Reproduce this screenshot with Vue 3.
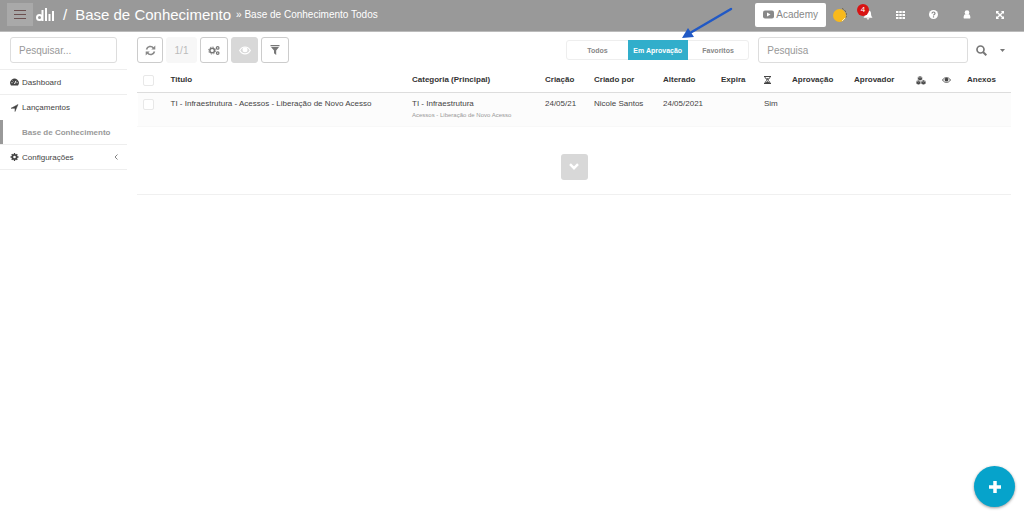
<script setup>
import { ref } from 'vue'

const tabs = ['Todos', 'Em Aprovação', 'Favoritos']
const active = ref('Em Aprovação')
const menuTerm = ref('')
const term = ref('')
const rows = [
  {
    title: 'TI - Infraestrutura - Acessos - Liberação de Novo Acesso',
    category: 'TI - Infraestrutura',
    sub: 'Acessos - Liberação de Novo Acesso',
    created: '24/05/21',
    author: 'Nicole Santos',
    changed: '24/05/2021',
    wait: 'Sim'
  }
]
</script>

<template>
  <div class="app">
    <header class="topbar">
      <button class="burger" aria-label="Menu">
        <svg width="12" height="11" viewBox="0 0 12 11"><path d="M0 1.5h12M0 5.5h12M0 9.5h12" stroke="#6b5050" /></svg>
      </button>
      <svg class="logo" width="19" height="14" viewBox="0 0 19 14" fill="none" stroke="#fff" stroke-width="2">
        <circle cx="3.5" cy="9.5" r="2.5" /><path d="M6.500 2v11M10 0v13M13.500 6v7M17 3v10" />
      </svg>
      <span class="slash">/</span>
      <h1>Base de Conhecimento</h1>
      <span class="crumb">» Base de Conhecimento Todos</span>
      <a class="academy" href="#">
        <svg width="11" height="9" viewBox="0 0 11 9"><rect y="0.5" width="11" height="8" rx="2" fill="#888" /><path d="M4 2.5v4l3.5-2z" fill="#fff" /></svg>
        Academy
      </a>
      <svg class="coin" width="14" height="16" viewBox="0 0 14 16">
        <path d="M9 1.5a7 7 0 0 1 4 9" fill="none" stroke="#705f38" stroke-dasharray="2 1" />
        <circle cx="6.5" cy="8.5" r="6.5" fill="#f8b91c" /><path d="M9 14l3-3" stroke="#fff0bd" />
      </svg>
      <nav class="icons">
        <button aria-label="Notificações">
          <svg width="10" height="10" viewBox="0 0 10 10" fill="#fff"><path d="M5 0.5a3 3 0 0 1 3 3c0 2 .5 3 1.500 4.300H.5C1.500 6.500 2 5.500 2 3.500a3 3 0 0 1 3-3zM3.700 8.300h2.600a1.300 1.300 0 0 1-2.600 0z" /></svg>
          <span class="badge">4</span>
        </button>
        <button aria-label="Aplicativos">
          <svg width="9" height="8" viewBox="0 0 9 8"><path d="M0 1h9M0 4h9M0 7h9" stroke="#fff" stroke-width="2.200" stroke-dasharray="2.500 .75" /></svg>
        </button>
        <button aria-label="Ajuda">
          <svg width="9" height="9" viewBox="0 0 9 9"><circle cx="4.500" cy="4.500" r="4.500" fill="#fff" /><path d="M3 3.500c0-2 3-2 3 0 0 1-1.500 1-1.500 2M4.500 6.300v1.200" fill="none" stroke="#888" stroke-width="1.200" /></svg>
        </button>
        <button aria-label="Usuário">
          <svg width="8" height="9" viewBox="0 0 8 9" fill="#fff"><circle cx="4" cy="2.500" r="2.300" /><path d="M1 8.500C.3 8.500.5 4.500 2.300 4.300h3.400C7.500 4.500 7.700 8.500 7 8.500z" /></svg>
        </button>
        <button aria-label="Tela cheia">
          <svg width="8" height="8" viewBox="0 0 9 9" fill="#fff"><path d="M0 0h3.500L0 3.500zM9 0v3.500L5.500 0zM0 9V5.500L3.500 9zM9 9H5.500L9 5.500z" /><path d="M1 1l7 7M8 1L1 8" stroke="#fff" stroke-width="1.600" /></svg>
        </button>
      </nav>
    </header>

    <div class="body">
      <aside>
        <div class="side-search"><input v-model="menuTerm" class="field" type="text" placeholder="Pesquisar..." aria-label="Pesquisar no menu"></div>
        <nav class="menu">
          <a href="#" class="item">
            <svg width="9" height="8" viewBox="0 0 9 8"><path d="M1 7.500a4.300 4.300 0 1 1 7 0z" fill="#444" /><path d="M4.500 6L6 2.800M1.500 4.700h1M2.700 2.700l.6.6M6.600 4.700h1" stroke="#fff" /></svg>
            Dashboard
          </a>
          <div class="group">
            <a href="#" class="item">
              <svg width="9" height="8" viewBox="0 0 9 8"><path d="M8 .5L5 7.500V4.300H1z" fill="#444" stroke="#444" stroke-width=".5" /></svg>
              Lançamentos
            </a>
            <a href="#" class="item current">Base de Conhecimento</a>
          </div>
          <a href="#" class="item">
            <svg width="9" height="8" viewBox="0 0 8 8"><circle cx="4" cy="4" r="3" fill="#444" /><path d="M4 0v8M0 4h8M1.200 1.200l5.600 5.600M6.800 1.200L1.200 6.800" stroke="#444" stroke-width="1.300" /><circle cx="4" cy="4" r="1.300" fill="#fff" /></svg>
            Configurações
            <svg class="chev" width="4" height="6" viewBox="0 0 4 6"><path d="M3.500.5L1 3l2.500 2.500" fill="none" stroke="#777" stroke-width=".9" /></svg>
          </a>
        </nav>
      </aside>

      <main>
        <div class="toolbar">
          <button class="btn" aria-label="Atualizar">
            <svg width="11" height="11" viewBox="0 0 11 11" fill="none" stroke="#888" stroke-width="1.600"><path d="M1.500 4.500a4 4 0 0 1 7-1.500M9.500 6.500a4 4 0 0 1-7 1.500" /><path d="M10.300 .5v4h-4zM.7 10.500v-4h4z" fill="#888" stroke="none" /></svg>
          </button>
          <button class="btn page" disabled>1/1</button>
          <button class="btn wide" aria-label="Configurar">
            <svg width="12" height="11" viewBox="0 0 13 11" fill="none" stroke="#777"><circle cx="4.500" cy="5.500" r="2.500" stroke-width="1.600" /><circle cx="4.500" cy="5.500" r="3.800" stroke-dasharray="1.500 1.480" /><circle cx="10.500" cy="2.700" r="1.400" stroke-width="1.300" /><circle cx="10.500" cy="8.300" r="1.400" stroke-width="1.300" /></svg>
          </button>
          <button class="btn page grey" disabled aria-label="Visualizar">
            <svg width="12" height="9" viewBox="0 0 12 9"><path d="M.7 4.500C3-.2 9-.2 11.300 4.500 9 9 3 9 .7 4.500z" fill="none" stroke="#fff" stroke-width="1.200" /><circle cx="6" cy="3.700" r="2.500" fill="#fff" /></svg>
          </button>
          <button class="btn wide" aria-label="Filtrar">
            <svg width="10" height="10" viewBox="0 0 10 10" fill="#777"><path d="M.5 0h9v1.300h-9zM1 2h8L6.200 5.500V10L4 8.300V5.500z" /></svg>
          </button>
          <div class="tabs">
            <button v-for="t in tabs" :key="t" :class="{ on: t === active }" @click="active = t">{{ t }}</button>
          </div>
          <input v-model="term" class="field search" type="text" placeholder="Pesquisa" aria-label="Pesquisa">
          <button class="plain" aria-label="Buscar">
            <svg width="11" height="11" viewBox="0 0 11 11" fill="none" stroke="#777"><circle cx="4.500" cy="4.500" r="3.500" stroke-width="1.700" /><path d="M7 7l3.300 3.300" stroke-width="2" /></svg>
          </button>
          <button class="plain more" aria-label="Mais opções">
            <svg width="5" height="3" viewBox="0 0 5 3"><path d="M0 0h5L2.500 3z" fill="#777" /></svg>
          </button>
        </div>

        <table>
          <colgroup>
            <col class="w28"><col><col class="w133"><col class="w49"><col class="w69"><col class="w58"><col class="w43"><col class="w28"><col class="w62"><col class="w62"><col class="w26"><col class="w25"><col class="w49">
          </colgroup>
          <thead>
            <tr>
              <th><input type="checkbox" aria-label="Selecionar todos"></th>
              <th>Titulo</th><th>Categoria (Principal)</th><th>Criação</th><th>Criado por</th><th>Alterado</th><th>Expira</th>
              <th><svg width="7" height="8" viewBox="0 0 7 8"><path d="M0 .5h7M0 7.500h7" stroke="#444" /><path d="M1 1c0 2 2 2 2 3S1 5 1 7h5c0-2-2-2-2-3s2-1 2-3" fill="none" stroke="#444" stroke-width=".9" /><path d="M2 2.300h3L3.500 4zM1.500 7l2-2 2 2z" fill="#444" /></svg></th>
              <th>Aprovação</th><th>Aprovador</th>
              <th><svg width="10" height="9" viewBox="0 0 10 9" fill="#444" stroke="#fff" stroke-width=".4"><path d="M4 0l2.300 1v2.700L4 4.700 1.700 3.700V1zM2.500 4l2.300 1v2.700L2.500 8.700.2 7.700V5zM7.400 4l2.400 1v2.700L7.400 8.700 5 7.700V5z" /><path d="M1.700 1L4 2l2.300-1M.2 5l2.300 1 2.300-1M5 5l2.400 1 2.400-1" fill="none" /></svg></th>
              <th><svg width="9" height="6" viewBox="0 0 9 6"><path d="M.5 3C2.500-.3 6.500-.3 8.500 3 6.500 6.300 2.500 6.300.5 3z" fill="none" stroke="#555" stroke-width=".9" /><circle cx="4.500" cy="2.700" r="1.900" fill="#444" /></svg></th>
              <th>Anexos</th>
            </tr>
          </thead>
          <tbody>
            <tr v-for="r in rows" :key="r.title">
              <td><input type="checkbox" :aria-label="r.title"></td>
              <td>{{ r.title }}</td>
              <td>{{ r.category }}<small>{{ r.sub }}</small></td>
              <td>{{ r.created }}</td><td>{{ r.author }}</td><td>{{ r.changed }}</td><td></td><td>{{ r.wait }}</td>
              <td></td><td></td><td></td><td></td><td></td>
            </tr>
          </tbody>
        </table>

        <div class="load">
          <button aria-label="Carregar mais">
            <svg width="10" height="7" viewBox="0 0 10 7"><path d="M1 1.200l4 4 4-4" fill="none" stroke="#fff" stroke-width="2.400" /></svg>
          </button>
        </div>
      </main>
    </div>

    <button class="fab" aria-label="Adicionar">
      <svg width="12" height="12" viewBox="0 0 12 12"><path d="M6 0v12M0 6h12" stroke="#fff" stroke-width="3.500" /></svg>
    </button>
    <svg class="arrow" width="52" height="34" viewBox="0 0 52 34">
      <path d="M49 2L8 26" stroke="#2159c5" stroke-width="2.500" stroke-linecap="round" /><path d="M0 31L6 21l6 9z" fill="#2159c5" />
    </svg>
  </div>
</template>

<style>
body { margin: 0; background: #fff; }
</style>

<style scoped>
.app, .app * { box-sizing: border-box; }
.app { min-height: 100vh; font-family: "Liberation Sans", Arial, sans-serif; font-size: 8px; color: #444; }
svg { display: block; flex: none; }
button { font-family: inherit; border: 0; padding: 0; background: none; cursor: pointer; display: flex; align-items: center; justify-content: center; }
a { color: inherit; text-decoration: none; }

.topbar { display: flex; align-items: center; height: 32px; padding: 0 8px 2px 7px; background: #999; border-bottom: 1px solid #bbb; color: #fff; white-space: nowrap; }
.burger { width: 26px; height: 23px; background: #a9a9a9; }
.logo { margin-left: 3px; }
.slash { margin: 0 8px; font-size: 15px; }
h1 { margin: 0; font-size: 15px; font-weight: 400; }
.crumb { margin-left: 5px; font-size: 10px; }
.academy { display: flex; align-items: center; gap: 2px; height: 24px; margin-left: auto; padding: 0 8px; border-radius: 2px; background: #fff; color: #888; font-size: 10px; }
.coin { margin: 0 4px 0 7px; }
.icons { display: flex; }
.icons button { position: relative; width: 33px; height: 24px; }
.badge { position: absolute; left: 6px; top: 1px; width: 12px; height: 12px; border-radius: 50%; background: #d81313; color: #fff; font-size: 8px; line-height: 12px; text-align: center; }

.body { display: flex; }
aside { width: 127px; flex: none; }
.side-search { padding: 5px 10px 6px; border-bottom: 1px solid #eee; }
.field { width: 100%; height: 26px; padding: 0 8px; border: 1px solid #ddd; border-radius: 3px; background: #fff; color: #555; font-family: inherit; font-size: 10px; outline: none; }
.field::placeholder { color: #999; opacity: 1; }
.item { display: flex; align-items: center; gap: 3px; height: 25px; padding: 0 9px 0 10px; border-bottom: 1px solid #eee; }
.group { border-bottom: 1px solid #eee; }
.group .item { border-bottom: 0; }
.group .current { height: 24px; padding-left: 19px; border-left: 3px solid #999; color: #999; font-weight: 700; }
.chev { margin-left: auto; }

main { flex: 1; min-width: 0; padding: 5px 13px 0 10px; }
.toolbar { display: flex; align-items: center; gap: 3px; }
.btn { width: 26px; height: 26px; border: 1px solid #ccc; border-radius: 3px; background: #fff; }
.btn.wide { width: 28px; }
.btn.page { width: 31px; border-color: #f7f7f7; background: #f7f7f7; color: #bbb; font-size: 10px; }
.btn.grey { width: 27px; border-color: #d8d8d8; background: #d8d8d8; }
.tabs { display: flex; width: 183px; height: 20px; margin: 0 6px 0 auto; border: 1px solid #eee; border-radius: 3px; }
.tabs button { flex: 1 1 0; min-width: 0; margin: -1px 0; color: #888; font-size: 7px; font-weight: 700; white-space: nowrap; }
.tabs .on { background: #31aecb; color: #fff; }
.search { width: 24%; }
.plain { width: 20px; height: 24px; }
.plain.more { width: 17px; }

table { width: 100%; margin-top: 6px; border-collapse: collapse; table-layout: fixed; border-left: 1px solid #fff; }
th, td { padding: 0 0 0 5px; text-align: left; white-space: nowrap; line-height: 10px; }
th { height: 23px; color: #333; border-bottom: 1px solid #ddd; }
td { height: 34px; padding-top: 6px; vertical-align: top; background: #fcfcfc; border-bottom: 1px solid #f8f8f8; }
small { display: block; margin-top: 1px; font-size: 6px; color: #999; }
input[type="checkbox"] { appearance: none; display: block; width: 11px; height: 11px; margin: 0; border: 1px solid #e8e8e8; border-radius: 2px; background: #fff; }
.w25 { width: 25px; }
.w26 { width: 26px; }
.w28 { width: 28px; }
.w43 { width: 43px; }
.w49 { width: 49px; }
.w58 { width: 58px; }
.w62 { width: 62px; }
.w69 { width: 69px; }
.w133 { width: 133px; }

.load { display: flex; justify-content: center; padding: 27px 0 14px; border-bottom: 1px solid #f0f0f0; }
.load button { width: 27px; height: 26px; border-radius: 3px; background: #d8d8d8; }
.fab { position: fixed; right: 9px; bottom: 10px; width: 41px; height: 41px; border-radius: 50%; background: #06a3cb; box-shadow: 0 1px 3px #999; }
.arrow { position: absolute; left: 682px; top: 7px; pointer-events: none; }
</style>
